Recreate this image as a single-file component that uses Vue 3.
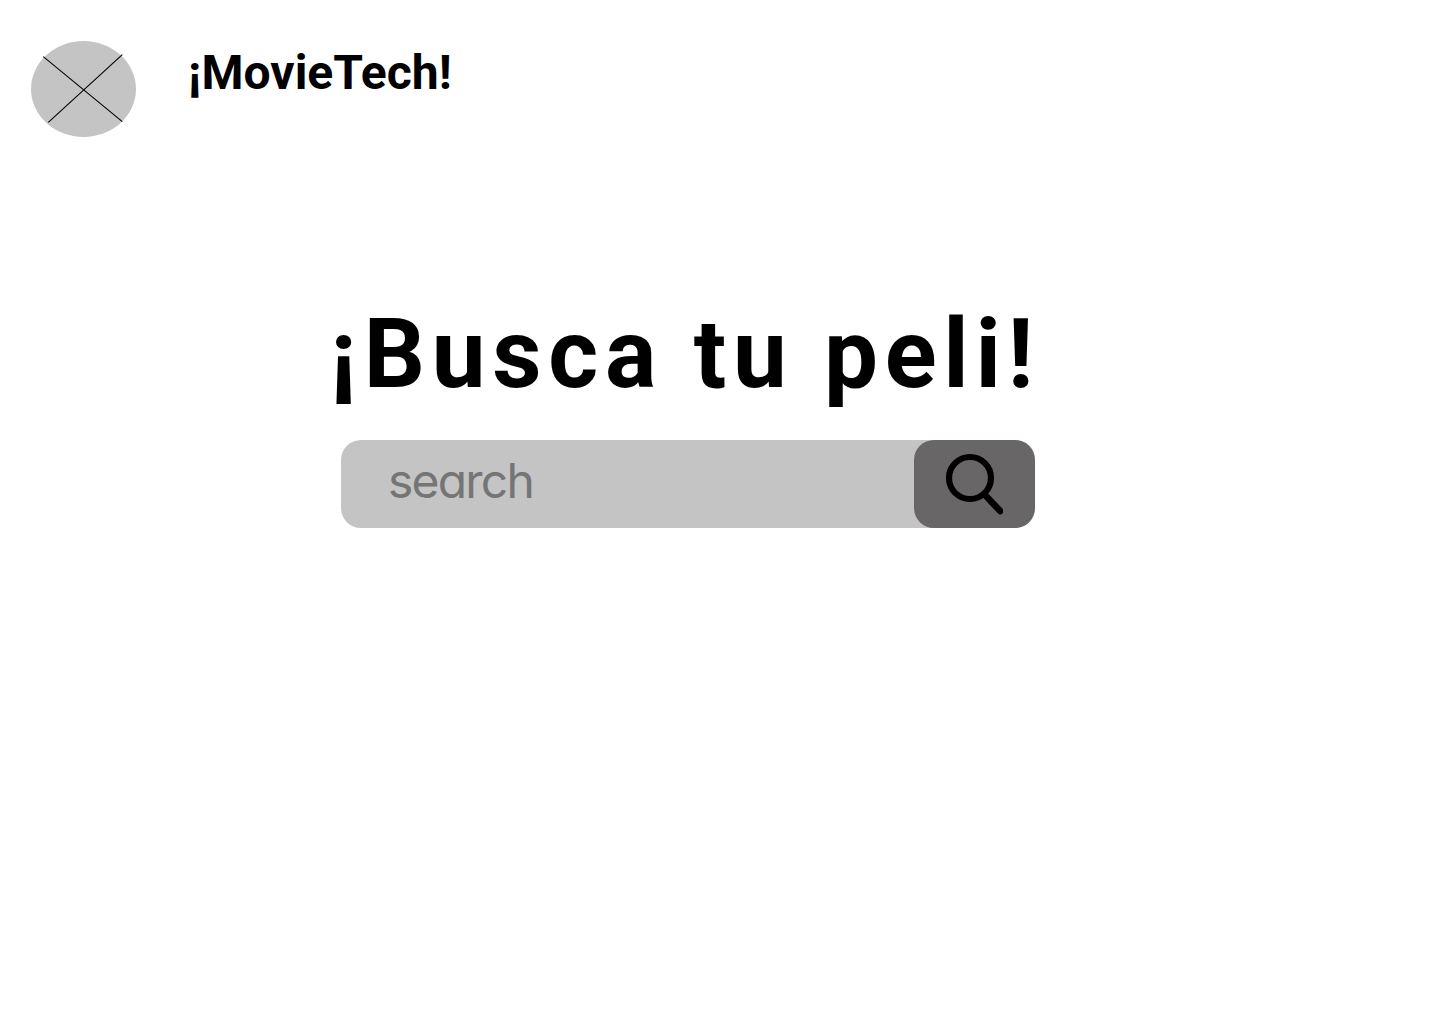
<script setup>
const brand = '¡MovieTech!'
const title = '¡Busca tu peli!'
</script>

<template>
  <div class="page">
    <header class="header">
      <svg class="logo" width="105" height="96" viewBox="0 0 105 96">
        <ellipse cx="52.5" cy="48" rx="52.5" ry="48" fill="#c4c4c4" />
        <path d="M12.3 15.6 91.3 80.6M91.3 13.6 17.3 81.4" stroke="#000" stroke-width="1.1" fill="none" />
      </svg>
      <div class="brand">{{ brand }}</div>
    </header>
    <main class="main">
      <h1 class="title">{{ title }}</h1>
      <form class="search" @submit.prevent>
        <input class="field" type="text" placeholder="search" />
        <button class="button" aria-label="search">
          <svg width="57" height="62" viewBox="1 0 57 62" fill="none" stroke="#000" stroke-width="6.2">
            <circle cx="25" cy="25" r="21" />
            <path d="M39.5 41.5 55.2 58" stroke-linecap="round" stroke-width="6.6" />
          </svg>
        </button>
      </form>
    </main>
  </div>
</template>

<style>
body { margin: 0; background: #fff; }
</style>

<style scoped>
.page { width: 1440px; height: 1024px; box-sizing: border-box; overflow: hidden; background: #fff; color: #000; font-family: Roboto, sans-serif; }
.header { display: flex; height: 137px; padding: 41px 0 0 31px; box-sizing: border-box; }
.logo { display: block; flex: none; }
.brand { margin: 4px 0 0 52px; font-size: 48px; line-height: 56px; font-weight: 700; white-space: nowrap; }
.main { padding: 161px 0 0 330px; }
.title { margin: 0; font-size: 96px; line-height: 112px; font-weight: 700; letter-spacing: 0.07em; white-space: nowrap; }
.search { display: flex; width: 694px; height: 88px; margin: 30px 0 0 11px; border-radius: 20px; background: #c4c4c4; }
.field { flex: 1; min-width: 0; box-sizing: border-box; height: 88px; border: 0; padding: 0 0 8px 47px; background: transparent; outline: 0; font: 48px Inter, sans-serif; font-feature-settings: "cv11" 1; letter-spacing: -1.8px; }
.field::placeholder { color: #757575; opacity: 1; }
.button { display: flex; align-items: center; justify-content: center; width: 121px; height: 88px; padding: 0; border: 0; border-radius: 20px; background: #696667; }
</style>
